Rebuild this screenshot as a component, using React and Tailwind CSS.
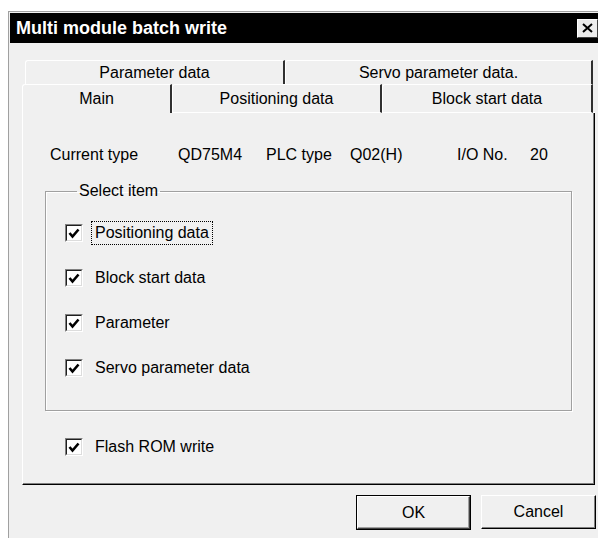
import React, { useState } from 'react'

const font = { fontFamily: '"Liberation Sans", Arial, sans-serif' }

// Classic 3D checkbox
const CheckBox = ({ checked }) => (
  <div className="w-[18px] h-[18px] border border-t-[#808080] border-l-[#808080] border-b-white border-r-white shrink-0">
    <div className="w-full h-full border border-t-[#202020] border-l-[#202020] border-b-[#dcdcdc] border-r-[#dcdcdc] bg-white flex items-center justify-center">
      {checked && (
        <svg width="12" height="11" viewBox="0 0 12 11">
          <polyline points="1.5,5 4.5,8.5 10.5,1.5" fill="none" stroke="#000" strokeWidth="2.6" />
        </svg>
      )}
    </div>
  </div>
)

const CheckRow = ({ label, checked, focused, onToggle }) => (
  <div className="flex items-center h-[20px] cursor-default" onClick={onToggle}>
    <CheckBox checked={checked} />
    {focused ? (
      <span className="ml-[8px] px-[3px] h-[24px] leading-[22px] border border-dotted border-black">{label}</span>
    ) : (
      <span className="ml-[12px] leading-[20px]">{label}</span>
    )}
  </div>
)

const Tab = ({ label, width, height, selected, bottomLine }) => (
  <div
    className={`flex items-center justify-center shrink-0 border-t border-l border-t-white border-l-white border-r-2 border-r-[#303030] rounded-tl-[3px] ${
      bottomLine ? 'border-b border-b-white' : ''
    } ${selected ? 'bg-[#f0f0f0]' : ''}`}
    style={{ width, height }}
  >
    <span className="leading-[18px]">{label}</span>
  </div>
)

export default function App() {
  const [items, setItems] = useState({
    pos: true,
    block: true,
    param: true,
    servo: true,
    flash: true,
  })
  const toggle = (k) => setItems({ ...items, [k]: !items[k] })

  return (
    <div className="w-[598px] h-[538px] bg-white overflow-hidden text-[16px] text-black" style={font}>
      {/* Dialog window */}
      <div className="ml-[8px] mt-[11px] w-[590px] h-[540px] border-t border-l border-[#a0a0a0] bg-[#f0f0f0] pt-[1px] pl-[1px]">
        {/* Title bar */}
        <div className="h-[30px] bg-black flex items-center pl-[6px]">
          <span className="text-white font-bold text-[18px] leading-[20px]">Multi module batch write</span>
          <div className="ml-auto mr-[0px] w-[21px] h-[19px] bg-[#ececec] border border-t-white border-l-white border-b-[#404040] border-r-[#404040] flex items-center justify-center">
            <svg width="11" height="10" viewBox="0 0 11 10">
              <path d="M1 1 L10 9 M10 1 L1 9" stroke="#000" strokeWidth="2" />
            </svg>
          </div>
        </div>

        {/* Body */}
        <div className="pl-[12px] pt-[17px]">
          {/* Back tab row */}
          <div className="flex ml-[3px]">
            <Tab label="Parameter data" width={260} height={24} />
            <Tab label="Servo parameter data." width={308} height={24} />
          </div>
          {/* Front tab row */}
          <div className="flex">
            <Tab label="Main" width={150} height={29} selected />
            <Tab label="Positioning data" width={210} height={29} bottomLine />
            <Tab label="Block start data" width={211} height={29} bottomLine />
            <div className="w-[2px] h-[29px] border-b border-b-white" />
          </div>

          {/* Tab panel */}
          <div className="w-[573px] h-[372px] border-l border-l-white border-r border-r-black border-b border-b-black shadow-[inset_-1px_-1px_0_#808080]">
            {/* Info row */}
            <div className="flex pl-[27px] pt-[33px] leading-[18px]">
              <span className="w-[128px]">Current type</span>
              <span className="w-[88px]">QD75M4</span>
              <span className="w-[84px]">PLC type</span>
              <span className="w-[107px]">Q02(H)</span>
              <span className="w-[73px]">I/O No.</span>
              <span>20</span>
            </div>

            {/* Select item group */}
            <fieldset className="ml-[22px] mt-[18px] w-[527px] h-[229px] border border-[#a0a0a0] shadow-[1px_1px_0_#fff,inset_1px_1px_0_#fff] pl-[19px] pt-[23px]">
              <legend className="ml-[12px] px-[2px] leading-[18px]">Select item</legend>
              <div className="flex flex-col gap-[25px]">
                <CheckRow label="Positioning data" checked={items.pos} focused onToggle={() => toggle('pos')} />
                <CheckRow label="Block start data" checked={items.block} onToggle={() => toggle('block')} />
                <CheckRow label="Parameter" checked={items.param} onToggle={() => toggle('param')} />
                <CheckRow label="Servo parameter data" checked={items.servo} onToggle={() => toggle('servo')} />
              </div>
            </fieldset>

            <div className="ml-[42px] mt-[26px]">
              <CheckRow label="Flash ROM write" checked={items.flash} onToggle={() => toggle('flash')} />
            </div>
          </div>

          {/* Buttons */}
          <div className="flex justify-end gap-[10px] mt-[10px] w-[574px]">
            <button className="w-[115px] h-[35px] border border-black bg-[#f0f0f0]">
              <div className="w-full h-full border border-t-white border-l-white border-b-[#404040] border-r-[#404040] shadow-[inset_-1px_-1px_0_#a0a0a0] flex items-center justify-center leading-[18px]">
                OK
              </div>
            </button>
            <button className="w-[115px] h-[34px] border border-t-white border-l-white border-b-black border-r-black bg-[#f0f0f0] shadow-[inset_-1px_-1px_0_#808080] flex items-center justify-center leading-[18px]">
              Cancel
            </button>
          </div>
        </div>
      </div>
    </div>
  )
}
